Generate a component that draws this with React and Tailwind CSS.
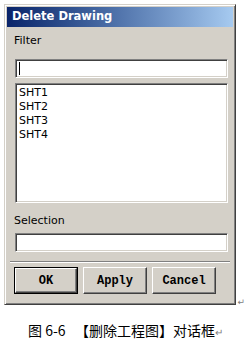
const sunken =
  "border border-t-[#808080] border-l-[#808080] border-r-white border-b-white shadow-[inset_1px_1px_0_#404040,inset_-1px_-1px_0_#d4d0c8] bg-white";

const Btn = ({ label, isDefault }) => (
  <div className={isDefault ? "w-[64px] h-[27px] border border-black" : "w-[64px] h-[27px]"}>
    <div className="w-full h-full flex items-center justify-center bg-[#d4d0c8] border border-t-white border-l-white border-r-[#404040] border-b-[#404040] shadow-[inset_-1px_-1px_0_#808080] font-['Liberation_Mono',monospace] font-bold text-[12px] text-black">
      {label}
    </div>
  </div>
);

const App = () => {
  const sheets = ["SHT1", "SHT2", "SHT3", "SHT4"];

  return (
    <div className="w-[245px] h-[340px] bg-white font-['DejaVu_Sans',sans-serif] overflow-hidden">
      <div className="flex items-end pt-[4px] pl-[4px]">
        {/* dialog */}
        <div className="w-[235px] h-[301px] bg-[#d4d0c8] border border-t-[#d4d0c8] border-l-[#d4d0c8] border-r-[#404040] border-b-[#404040] shadow-[inset_1px_1px_0_#ffffff,inset_-1px_-1px_0_#808080] p-[2px] flex flex-col">
          <div className="h-[20px] bg-gradient-to-r from-[#0a246a] to-[#a6caf0] flex items-center pl-[5px]">
            <span className="text-white font-bold text-[11.5px] leading-none">Delete Drawing</span>
          </div>

          <div className="mt-[7px] ml-[7px] text-[11px] leading-[13px] text-black">Filter</div>
          <div className={`mt-[12px] ml-[8px] w-[213px] h-[19px] ${sunken} flex items-center pl-[3px]`}>
            <div className="w-px h-[13px] bg-black" />
          </div>

          <div className={`mt-[5px] ml-[8px] w-[213px] h-[120px] ${sunken} px-[3px] pt-[2px]`}>
            {sheets.map((s) => (
              <div key={s} className="text-[11px] leading-[14px] text-black">
                {s}
              </div>
            ))}
          </div>

          <div className="mt-[11px] ml-[7px] text-[11px] leading-[13px] text-black">Selection</div>
          <div className={`mt-[6px] ml-[8px] w-[213px] h-[19px] ${sunken}`} />

          <div className="mt-[9px] mx-[3px] border-t border-t-[#808080] border-b border-b-white" />

          <div className="mt-[4px] ml-[7px] flex gap-[5px]">
            <Btn label="OK" isDefault />
            <Btn label="Apply" />
            <Btn label="Cancel" />
          </div>
        </div>
        <span className="ml-[1px] mb-[-2px] text-[9px] leading-none text-[#808080]">↵</span>
      </div>

      <div className="mt-[17px] pl-[28px] whitespace-pre text-[14px] leading-[16px] text-black font-['Noto_Sans_CJK_SC',sans-serif]">
        图 6-6   【删除工程图】对话框<span className="text-[10px] text-[#808080]">↵</span>
      </div>
    </div>
  );
};

export default App;
